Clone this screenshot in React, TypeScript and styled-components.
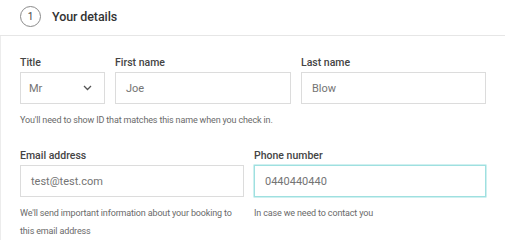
import React from 'react';
import styled, {createGlobalStyle} from 'styled-components';

const GlobalStyle = createGlobalStyle`
  body {
    margin: 0;
    background: #ffffff;
    font-family: Roboto, "Liberation Sans", sans-serif;
  }
`;

const Section = styled.section`
  width: 505px;
  background: #ffffff;
`;

const Header = styled.header`
  display: flex;
  align-items: center;
  height: 35px;
  padding-left: 20px;
  border-bottom: 1px solid #e6e6e6;
`;

const StepBadge = styled.span`
  display: flex;
  align-items: center;
  justify-content: center;
  width: 19px;
  height: 19px;
  border: 1px solid #8a8a8a;
  border-radius: 50%;
  font-size: 10px;
  color: #444;
  margin-top: -3px;
`;

const HeaderTitle = styled.h2`
  margin: -3px 0 0 11px;
  font-size: 12.5px;
  font-weight: 500;
  color: #333;
  letter-spacing: -0.1px;
`;

const Body = styled.div`
  border-left: 1px solid #ececec;
  padding: 20px 0 0 19px;
  display: flex;
  flex-direction: column;
  gap: 20px;
`;

const Group = styled.div``;

const Row = styled.div<{columns: string; gap: number}>`
  display: grid;
  grid-template-columns: ${props => props.columns};
  column-gap: ${props => props.gap}px;
  width: 466px;
`;

const Field = styled.div`
  display: flex;
  flex-direction: column;
`;

const Label = styled.label`
  font-size: 10.5px;
  font-weight: 500;
  color: #444;
  line-height: 14px;
  margin-bottom: 2px;
`;

const InputBox = styled.div<{focused?: boolean}>`
  display: flex;
  align-items: center;
  justify-content: space-between;
  height: 30px;
  padding: 0 10px;
  border: 1px solid ${props => props.focused ? '#9fe0e0' : '#dcdcdc'};
  box-shadow: ${props => props.focused ? '0 0 0 0.5px #9fe0e0' : 'none'};
  font-size: 11px;
  color: #747474;
`;

const SelectBox = styled(InputBox)`
  padding: 0 12px 0 8px;
`;

const Hint = styled.p`
  margin: 7px 0 0;
  font-size: 9px;
  line-height: 18px;
  color: #6a6a6a;
  letter-spacing: -0.15px;
`;

const Chevron: React.FC = () => (
  <svg width="9" height="6" viewBox="0 0 9 6">
    <polyline points="1,1 4.5,4.5 8,1" fill="none" stroke="#555" strokeWidth="1.3" />
  </svg>
);

const App: React.FC = () => (
  <Section>
    <GlobalStyle />
    <Header>
      <StepBadge>1</StepBadge>
      <HeaderTitle>Your details</HeaderTitle>
    </Header>
    <Body>
      <Group>
        <Row columns="85px 176px 1fr" gap={10}>
          <Field>
            <Label>Title</Label>
            <SelectBox>
              Mr
              <Chevron />
            </SelectBox>
          </Field>
          <Field>
            <Label>First name</Label>
            <InputBox>Joe</InputBox>
          </Field>
          <Field>
            <Label>Last name</Label>
            <InputBox>Blow</InputBox>
          </Field>
        </Row>
        <Hint>You'll need to show ID that matches this name when you check in.</Hint>
      </Group>
      <Row columns="224px 1fr" gap={10}>
        <Field>
          <Label>Email address</Label>
          <InputBox>test@test.com</InputBox>
          <Hint>We'll send important information about your booking to this email address</Hint>
        </Field>
        <Field>
          <Label>Phone number</Label>
          <InputBox focused>0440440440</InputBox>
          <Hint>In case we need to contact you</Hint>
        </Field>
      </Row>
    </Body>
  </Section>
);

export default App;
